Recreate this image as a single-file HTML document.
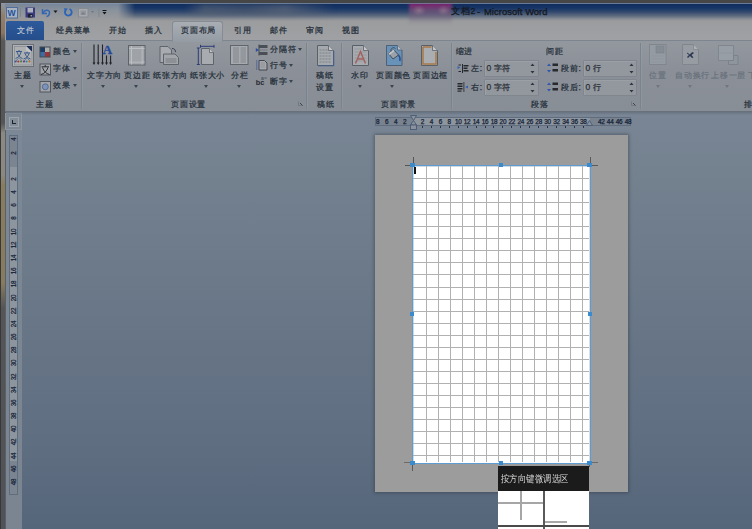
<!DOCTYPE html>
<html><head><meta charset="utf-8">
<style>
*{margin:0;padding:0;box-sizing:border-box}
html,body{width:752px;height:529px;overflow:hidden;background:#6a7889;font-family:"Liberation Sans",sans-serif}
.a{position:absolute}
.t{position:absolute;font-size:8.45px;line-height:9px;color:#26303b;-webkit-text-stroke:0.25px currentColor;white-space:nowrap;letter-spacing:0.75px}
.ar{position:absolute;width:0;height:0;border-left:2.5px solid transparent;border-right:2.5px solid transparent;border-top:3px solid #3a4450}
.sep{position:absolute;top:43px;width:1px;height:66px;background:#7b838d;box-shadow:1px 0 0 rgba(165,170,178,.25)}
svg{position:absolute;overflow:visible}
.rn{position:absolute;top:117px;width:20px;text-align:center;font-size:6.4px;line-height:9px;color:#142238;letter-spacing:-0.25px;font-weight:normal;-webkit-text-stroke:0.25px currentColor}
.vn{position:absolute;left:8.5px;width:10px;height:10px;text-align:center;font-size:6.3px;line-height:10px;color:#142238;transform:rotate(-90deg);letter-spacing:-0.2px;font-weight:normal;-webkit-text-stroke:0.2px currentColor}
</style></head><body><div id="root" style="position:absolute;left:0;top:0;width:752px;height:529px;overflow:hidden">
<!-- ===== top strip + title bar ===== -->
<div class="a" style="left:0;top:3px;width:752px;height:18px;background:linear-gradient(#8e9aaa 0px,#78869a 1px,#86909c 6px,#93979c 12px,#9b9c9e 18px)"></div>
<div class="a" style="left:0;top:3px;width:752px;height:18px;background:linear-gradient(#6a7a90 0px,#112c5c 1px,#163566 5px,#33496e 9px,#5f6c80 13px,rgba(128,134,143,.6) 16px,rgba(154,155,157,0) 18px);-webkit-mask-image:linear-gradient(90deg,transparent 118px,#000 135px)"></div>
<div class="a" style="left:185px;top:4px;width:150px;height:11px;background:linear-gradient(90deg,rgba(100,108,120,0),rgba(100,108,120,.55) 20px,rgba(95,102,114,.45) 60px,rgba(105,112,124,.6) 100px,rgba(100,108,120,0));filter:blur(2px)"></div>
<div class="a" style="left:0;top:12px;width:40px;height:29px;background:radial-gradient(ellipse at 0% 70%,rgba(170,120,80,.45),rgba(160,130,100,0) 70%)"></div>
<div class="a" style="left:0;top:21px;width:752px;height:20px;background:linear-gradient(#9b9c9e,#9fa1a4)"></div>
<div class="a" style="left:409px;top:3px;width:43px;height:21px;background:linear-gradient(rgba(165,25,120,.95) 0px,rgba(130,40,110,.9) 2px,rgba(112,80,120,.85) 7px,rgba(118,100,128,.6) 13px,rgba(150,140,150,0) 21px);filter:blur(1.5px)"></div>
<div class="a" style="left:412px;top:5px;width:14px;height:11px;background:radial-gradient(ellipse,rgba(160,130,150,.6),rgba(160,130,150,0) 70%)"></div>
<div class="a" style="left:437px;top:5px;width:13px;height:11px;background:radial-gradient(ellipse,rgba(160,130,150,.55),rgba(160,130,150,0) 70%)"></div>
<div class="a" style="left:0;top:0;width:752px;height:3px;background:#464646"></div>
<div class="a" style="left:0;top:3px;width:752px;height:1px;background:rgba(130,150,175,.6)"></div>
<div class="t" style="left:451px;top:6px;font-size:8.6px;line-height:11px;color:#15181d">文档2</div><div class="t" style="left:477px;top:6px;font-size:9.5px;line-height:11px;color:#15181d">-</div><div class="t" style="left:484px;top:6px;font-size:9.4px;line-height:11px;color:#15181d;letter-spacing:0.05px">Microsoft Word</div>
<!-- tab row -->
<!-- left window frame -->
<div class="a" style="left:0;top:3px;width:1px;height:526px;background:#383838"></div>
<div class="a" style="left:1px;top:3px;width:4px;height:526px;background:linear-gradient(#8e96a2 0px,#8f7f70 12px,#8c7462 30px,#5a5855 38px,#555555 120px,#8a8982 130px,#8b8880 172px,#8a7d5e 182px,#887b5e 280px,#555558 305px,#4f5257 526px)"></div>
<div class="a" style="left:5px;top:112px;width:1px;height:417px;background:#4a4f55"></div>

<!-- ===== quick access toolbar ===== -->
<svg style="left:0;top:0" width="120" height="21" viewBox="0 0 120 21">
  <rect x="6.5" y="7.5" width="11" height="10.5" fill="#aab2bd" stroke="#4f6e9c" stroke-width="1"/>
  <text x="7.6" y="16.3" font-family="Liberation Sans" font-weight="bold" font-size="8.6" fill="#1f54a0">W</text>
  <rect x="20" y="8" width="1" height="9" fill="#7d8590"/>
  <rect x="25.5" y="7.5" width="9.5" height="10" fill="#3a3a7c"/>
  <rect x="27.5" y="8" width="5.5" height="4.5" fill="#aeb2bf"/>
  <rect x="28" y="14" width="4.5" height="3.5" fill="#1e2036"/>
  <rect x="30.5" y="15" width="1.5" height="1.5" fill="#9a9ca8"/>
  <path d="M42.5 9 V13.5 H47" fill="none" stroke="#3466b4" stroke-width="1.5"/>
  <path d="M43 13 C44.5 9.5 49.5 9.3 49.5 12.5 C49.5 15 48 16.3 46.5 16.5" fill="none" stroke="#3466b4" stroke-width="1.5"/>
  <path d="M53.5 10.5 L57.5 10.5 L55.5 13 Z" fill="#151515"/>
  <path d="M65.7 10 A3.4 3.4 0 1 0 69.5 9" fill="none" stroke="#2a64b8" stroke-width="1.8"/>
  <path d="M63.8 8.2 L67.8 8.6 L65.5 11.8 Z" fill="#2a64b8"/>
  <rect x="78.5" y="8.5" width="9.5" height="8.5" fill="#a6aaaf" stroke="#868a90" stroke-width="0.9"/>
  <rect x="80.5" y="10.5" width="5.5" height="4.5" fill="#92969c"/>
  <path d="M81 14.5 L83 12 L85.5 14.5Z" fill="#7a7e84"/>
  <path d="M91 11 L94 11 L92.5 13 Z" fill="#73777d"/>
  <rect x="98.5" y="7" width="1" height="10" fill="#80868e"/>
  <rect x="102.5" y="10" width="4" height="1" fill="#151515"/>
  <path d="M102.5 12 L106.5 12 L104.5 14.5 Z" fill="#151515"/>
</svg>

<!-- ===== tabs ===== -->
<div class="a" style="left:6px;top:21px;width:38px;height:20px;background:linear-gradient(#2d5a9c,#244d8a);border-radius:2px 2px 0 0"></div>
<div class="t" style="left:17px;top:26px;color:#c9cfd8;-webkit-text-stroke:0.1px currentColor">文件</div>
<div class="t" style="left:56px;top:26px">经典菜单</div>
<div class="t" style="left:109px;top:26px">开始</div>
<div class="t" style="left:145px;top:26px">插入</div>
<div class="t" style="left:234px;top:26px">引用</div>
<div class="t" style="left:270px;top:26px">邮件</div>
<div class="t" style="left:306px;top:26px">审阅</div>
<div class="t" style="left:342px;top:26px">视图</div>

<!-- ===== ribbon panel ===== -->
<div class="a" style="left:5px;top:40px;width:747px;height:72px;background:linear-gradient(#93989f,#8b9098 30px,#888e96);border-top:1px solid #7d858f;border-left:1px solid #7d858f"></div>
<div class="a" style="left:5px;top:111px;width:747px;height:1px;background:#67707b"></div>
<div class="sep" style="left:81px"></div>
<div class="sep" style="left:306px"></div>
<div class="sep" style="left:341px"></div>
<div class="sep" style="left:451px"></div>
<div class="sep" style="left:640px"></div>
<!-- group labels -->
<div class="t" style="left:36px;top:99.5px">主题</div>
<div class="t" style="left:171px;top:99.5px">页面设置</div>
<div class="t" style="left:317px;top:99.5px">稿纸</div>
<div class="t" style="left:381px;top:99.5px">页面背景</div>
<div class="t" style="left:531px;top:99.5px">段落</div>
<div class="t" style="left:744px;top:99.5px">排</div>

<div class="a" style="left:172px;top:21px;width:51px;height:21px;background:linear-gradient(#a9aeb4,#9ba1a8 14px,#959ba3);border:1px solid #858c95;border-bottom:none;border-radius:3px 3px 0 0"></div>
<div class="t" style="left:181px;top:26px">页面布局</div>

<!-- ===== ribbon button labels ===== -->
<div class="t" style="left:14px;top:70.5px">主题</div>
<div class="ar" style="left:20px;top:85px"></div>
<div class="t" style="left:53px;top:46.5px">颜色</div><div class="ar" style="left:72.5px;top:50px"></div>
<div class="t" style="left:53px;top:63.5px">字体</div><div class="ar" style="left:72.5px;top:67px"></div>
<div class="t" style="left:53px;top:80.5px">效果</div><div class="ar" style="left:72.5px;top:84px"></div>
<div class="t" style="left:87px;top:70.5px">文字方向</div><div class="ar" style="left:100.5px;top:85px"></div>
<div class="t" style="left:124px;top:70.5px">页边距</div><div class="ar" style="left:134px;top:85px"></div>
<div class="t" style="left:153px;top:70.5px">纸张方向</div><div class="ar" style="left:166.5px;top:85px"></div>
<div class="t" style="left:190px;top:70.5px">纸张大小</div><div class="ar" style="left:203.5px;top:85px"></div>
<div class="t" style="left:231px;top:70.5px">分栏</div><div class="ar" style="left:236.5px;top:85px"></div>
<div class="t" style="left:270px;top:44.5px">分隔符</div><div class="ar" style="left:297.5px;top:48px"></div>
<div class="t" style="left:270px;top:60.5px">行号</div><div class="ar" style="left:288.5px;top:64px"></div>
<div class="t" style="left:270px;top:76.5px">断字</div><div class="ar" style="left:288.5px;top:80px"></div>
<div class="t" style="left:316px;top:70.5px">稿纸</div>
<div class="t" style="left:316px;top:82.5px">设置</div>
<div class="t" style="left:351px;top:70.5px">水印</div><div class="ar" style="left:357.5px;top:85px"></div>
<div class="t" style="left:376px;top:70.5px">页面颜色</div><div class="ar" style="left:390px;top:85px"></div>
<div class="t" style="left:413px;top:70.5px">页面边框</div>
<div class="t" style="left:455.5px;top:46.5px">缩进</div>
<div class="t" style="left:471px;top:63.5px">左:</div>
<div class="t" style="left:471px;top:82.5px">右:</div>
<div class="t" style="left:546px;top:46.5px">间距</div>
<div class="t" style="left:561px;top:63.5px">段前:</div>
<div class="t" style="left:561px;top:82.5px">段后:</div>
<!-- spin boxes -->
<div class="a" style="left:484px;top:60px;width:55px;height:17px;background:#93989f;border:1px solid #7f868e;border-radius:1px;box-shadow:inset 1px 1px 0 rgba(170,175,180,.35)"></div>
<div class="a" style="left:484px;top:79px;width:55px;height:17px;background:#93989f;border:1px solid #7f868e;border-radius:1px;box-shadow:inset 1px 1px 0 rgba(170,175,180,.35)"></div>
<div class="a" style="left:583px;top:60px;width:54px;height:17px;background:#93989f;border:1px solid #7f868e;border-radius:1px;box-shadow:inset 1px 1px 0 rgba(170,175,180,.35)"></div>
<div class="a" style="left:583px;top:79px;width:54px;height:17px;background:#93989f;border:1px solid #7f868e;border-radius:1px;box-shadow:inset 1px 1px 0 rgba(170,175,180,.35)"></div>
<div class="t" style="left:486.5px;top:63.5px;color:#2a2f36;letter-spacing:0.2px">0 字符</div>
<div class="t" style="left:486.5px;top:82.5px;color:#2a2f36;letter-spacing:0.2px">0 字符</div>
<div class="t" style="left:585.5px;top:63.5px;color:#2a2f36;letter-spacing:0.2px">0 行</div>
<div class="t" style="left:585.5px;top:82.5px;color:#2a2f36;letter-spacing:0.2px">0 行</div>
<svg style="left:0;top:0" width="752" height="112">
 <g fill="#2d3540">
  <path d="M530.5 66 L534.5 66 L532.5 63.5Z"/><path d="M530.5 71 L534.5 71 L532.5 73.5Z"/>
  <path d="M530.5 85 L534.5 85 L532.5 82.5Z"/><path d="M530.5 90 L534.5 90 L532.5 92.5Z"/>
  <path d="M629.5 66 L633.5 66 L631.5 63.5Z"/><path d="M629.5 71 L633.5 71 L631.5 73.5Z"/>
  <path d="M629.5 85 L633.5 85 L631.5 82.5Z"/><path d="M629.5 90 L633.5 90 L631.5 92.5Z"/>
 </g>
</svg>
<div class="t" style="left:649px;top:70.5px;color:#6a727c">位置</div><div class="ar" style="left:655.5px;top:85px;border-top-color:#6f7780"></div>
<div class="t" style="left:675px;top:70.5px;color:#6a727c">自动换行</div><div class="ar" style="left:687.5px;top:85px;border-top-color:#6f7780"></div>
<div class="t" style="left:711px;top:70.5px;color:#6a727c">上移一层</div><div class="ar" style="left:724.5px;top:85px;border-top-color:#6f7780"></div>
<div class="t" style="left:748px;top:70.5px;color:#6a727c">下</div>
<!-- dialog launchers -->
<svg style="left:0;top:0" width="752" height="112">
 <path d="M298.5 101.5 L298.5 105.5 L302.5 105.5" fill="none" stroke="#6e757e" stroke-width="0.8"/>
 <path d="M300 103 L302.5 105.5" stroke="#3c434c" stroke-width="1"/>
 <path d="M631.5 101.5 L631.5 105.5 L635.5 105.5" fill="none" stroke="#6e757e" stroke-width="0.8"/>
 <path d="M633 103 L635.5 105.5" stroke="#3c434c" stroke-width="1"/>
</svg>

<!-- ===== document area ===== -->
<div class="a" style="left:6px;top:112px;width:746px;height:417px;background:linear-gradient(#7a8695 0px,#74818f 60px,#6b7989 170px,#5f6e81 330px,#56667a 417px)"></div>
<div class="a" style="left:5px;top:112px;width:1px;height:417px;background:#5a6068"></div>
<div class="a" style="left:6px;top:112px;width:16px;height:417px;background:linear-gradient(#7c8896,#7b8591)"></div>
<!-- tab selector -->
<div class="a" style="left:5px;top:113px;width:17px;height:17px;border:1px solid #8d97a2;background:#7d8894"></div>
<div class="a" style="left:9px;top:117px;width:10px;height:10px;border:1px solid #9ca5ae;background:#838d98"></div>
<div class="a" style="left:12px;top:119.5px;width:1.2px;height:4.5px;background:#1a2230"></div>
<div class="a" style="left:12px;top:123px;width:3.5px;height:1.2px;background:#1a2230"></div>
<!-- vertical ruler -->
<div class="a" style="left:9px;top:135px;width:9px;height:360px;border:1px solid #5f6d7e;background:#8d959e"></div>
<div class="a" style="left:10px;top:136px;width:7px;height:31px;background:#7b8591"></div>
<div class="a" style="left:10px;top:461px;width:7px;height:33px;background:#7b8591"></div>
<!-- horizontal ruler -->
<div class="a" style="left:375px;top:117px;width:256px;height:9px;border:1px solid #5f6d7e;background:#8d959e"></div>
<div class="a" style="left:376px;top:118px;width:37px;height:7px;background:#79838f"></div>
<div class="a" style="left:590px;top:118px;width:40px;height:7px;background:#79838f"></div>
<div class="rn" style="left:367.74px">8</div>
<div class="rn" style="left:376.68px">6</div>
<div class="rn" style="left:385.62px">4</div>
<div class="rn" style="left:394.56px">2</div>
<div class="rn" style="left:412.44px">2</div>
<div class="rn" style="left:421.38px">4</div>
<div class="rn" style="left:430.32px">6</div>
<div class="rn" style="left:439.26px">8</div>
<div class="rn" style="left:448.20px">10</div>
<div class="rn" style="left:457.14px">12</div>
<div class="rn" style="left:466.08px">14</div>
<div class="rn" style="left:475.02px">16</div>
<div class="rn" style="left:483.96px">18</div>
<div class="rn" style="left:492.90px">20</div>
<div class="rn" style="left:501.84px">22</div>
<div class="rn" style="left:510.78px">24</div>
<div class="rn" style="left:519.72px">26</div>
<div class="rn" style="left:528.66px">28</div>
<div class="rn" style="left:537.60px">30</div>
<div class="rn" style="left:546.54px">32</div>
<div class="rn" style="left:555.48px">34</div>
<div class="rn" style="left:564.42px">36</div>
<div class="rn" style="left:573.36px">38</div>
<div class="rn" style="left:591.24px">42</div>
<div class="rn" style="left:600.18px">44</div>
<div class="rn" style="left:609.12px">46</div>
<div class="rn" style="left:618.06px">48</div>
<div class="a" style="left:421.94px;top:126px;width:1px;height:1.5px;background:#2a3545"></div>
<div class="a" style="left:430.88px;top:126px;width:1px;height:1.5px;background:#2a3545"></div>
<div class="a" style="left:439.82px;top:126px;width:1px;height:1.5px;background:#2a3545"></div>
<div class="a" style="left:448.76px;top:126px;width:1px;height:1.5px;background:#2a3545"></div>
<div class="a" style="left:457.70px;top:126px;width:1px;height:1.5px;background:#2a3545"></div>
<div class="a" style="left:466.64px;top:126px;width:1px;height:1.5px;background:#2a3545"></div>
<div class="a" style="left:475.58px;top:126px;width:1px;height:1.5px;background:#2a3545"></div>
<div class="a" style="left:484.52px;top:126px;width:1px;height:1.5px;background:#2a3545"></div>
<div class="a" style="left:493.46px;top:126px;width:1px;height:1.5px;background:#2a3545"></div>
<div class="a" style="left:502.40px;top:126px;width:1px;height:1.5px;background:#2a3545"></div>
<div class="a" style="left:511.34px;top:126px;width:1px;height:1.5px;background:#2a3545"></div>
<div class="a" style="left:520.28px;top:126px;width:1px;height:1.5px;background:#2a3545"></div>
<div class="a" style="left:529.22px;top:126px;width:1px;height:1.5px;background:#2a3545"></div>
<div class="a" style="left:538.16px;top:126px;width:1px;height:1.5px;background:#2a3545"></div>
<div class="a" style="left:547.10px;top:126px;width:1px;height:1.5px;background:#2a3545"></div>
<div class="a" style="left:556.04px;top:126px;width:1px;height:1.5px;background:#2a3545"></div>
<div class="a" style="left:564.98px;top:126px;width:1px;height:1.5px;background:#2a3545"></div>
<div class="a" style="left:573.92px;top:126px;width:1px;height:1.5px;background:#2a3545"></div>
<div class="a" style="left:582.86px;top:126px;width:1px;height:1.5px;background:#2a3545"></div>
<div class="vn" style="top:134.46px">4</div>
<div class="vn" style="top:147.63px">2</div>
<div class="vn" style="top:173.97px">2</div>
<div class="vn" style="top:187.14px">4</div>
<div class="vn" style="top:200.31px">6</div>
<div class="vn" style="top:213.48px">8</div>
<div class="vn" style="top:226.65px">10</div>
<div class="vn" style="top:239.82px">12</div>
<div class="vn" style="top:252.99px">14</div>
<div class="vn" style="top:266.16px">16</div>
<div class="vn" style="top:279.33px">18</div>
<div class="vn" style="top:292.50px">20</div>
<div class="vn" style="top:305.67px">22</div>
<div class="vn" style="top:318.84px">24</div>
<div class="vn" style="top:332.01px">26</div>
<div class="vn" style="top:345.18px">28</div>
<div class="vn" style="top:358.35px">30</div>
<div class="vn" style="top:371.52px">32</div>
<div class="vn" style="top:384.69px">34</div>
<div class="vn" style="top:397.86px">36</div>
<div class="vn" style="top:411.03px">38</div>
<div class="vn" style="top:424.20px">40</div>
<div class="vn" style="top:437.37px">42</div>
<div class="vn" style="top:450.54px">44</div>
<div class="vn" style="top:463.71px">46</div>
<div class="vn" style="top:476.88px">48</div>
<svg style="left:0;top:0" width="752" height="140">
 <path d="M410.5 115.5 H416.5 L413.5 120.5 Z" fill="#8a939d" stroke="#4a5a74" stroke-width="0.9"/>
 <path d="M413.5 120.5 L416.5 125 H410.5 Z" fill="#8a939d" stroke="#4a5a74" stroke-width="0.9"/>
 <rect x="410.5" y="125" width="6" height="4.5" fill="#8a939d" stroke="#4a5a74" stroke-width="0.9"/>
 <path d="M589.5 120.5 L592.5 125.5 H586.5 Z" fill="#8a939d" stroke="#4a5a74" stroke-width="0.9"/>
</svg>
<!-- page -->
<div class="a" style="left:375px;top:135px;width:253px;height:357px;background:#9c9c9c;box-shadow:0 0 3px 1px rgba(40,50,60,.45)"></div>
<!-- selection -->
<div class="a" style="left:412px;top:165px;width:179px;height:299px;background:#fff;border:1px solid #5d9bd0"></div>
<div class="a" style="left:413px;top:166px;width:177px;height:1px;background:#cfd9e0"></div>
<div class="a" style="left:413px;top:166px;width:1px;height:296px;background:#cfd9e0"></div>
<div class="a" style="left:589px;top:166px;width:1px;height:297px;background:#d3e0ea"></div>
<div>
<div class="a" style="left:426px;top:166px;width:1px;height:296px;background:#b1b1b1"></div>
<div class="a" style="left:438px;top:166px;width:1px;height:296px;background:#b1b1b1"></div>
<div class="a" style="left:450px;top:166px;width:1px;height:296px;background:#b1b1b1"></div>
<div class="a" style="left:462px;top:166px;width:1px;height:296px;background:#b1b1b1"></div>
<div class="a" style="left:474px;top:166px;width:1px;height:296px;background:#b1b1b1"></div>
<div class="a" style="left:486px;top:166px;width:1px;height:296px;background:#b1b1b1"></div>
<div class="a" style="left:498px;top:166px;width:1px;height:296px;background:#b1b1b1"></div>
<div class="a" style="left:510px;top:166px;width:1px;height:296px;background:#b1b1b1"></div>
<div class="a" style="left:522px;top:166px;width:1px;height:296px;background:#b1b1b1"></div>
<div class="a" style="left:534px;top:166px;width:1px;height:296px;background:#b1b1b1"></div>
<div class="a" style="left:546px;top:166px;width:1px;height:296px;background:#b1b1b1"></div>
<div class="a" style="left:558px;top:166px;width:1px;height:296px;background:#b1b1b1"></div>
<div class="a" style="left:570px;top:166px;width:1px;height:296px;background:#b1b1b1"></div>
<div class="a" style="left:582px;top:166px;width:1px;height:296px;background:#b1b1b1"></div>
<div class="a" style="left:413px;top:178px;width:176px;height:1px;background:#b1b1b1"></div>
<div class="a" style="left:413px;top:190px;width:176px;height:1px;background:#b1b1b1"></div>
<div class="a" style="left:413px;top:202px;width:176px;height:1px;background:#b1b1b1"></div>
<div class="a" style="left:413px;top:214px;width:176px;height:1px;background:#b1b1b1"></div>
<div class="a" style="left:413px;top:226px;width:176px;height:1px;background:#b1b1b1"></div>
<div class="a" style="left:413px;top:238px;width:176px;height:1px;background:#b1b1b1"></div>
<div class="a" style="left:413px;top:250px;width:176px;height:1px;background:#b1b1b1"></div>
<div class="a" style="left:413px;top:262px;width:176px;height:1px;background:#b1b1b1"></div>
<div class="a" style="left:413px;top:274px;width:176px;height:1px;background:#b1b1b1"></div>
<div class="a" style="left:413px;top:287px;width:176px;height:1px;background:#b1b1b1"></div>
<div class="a" style="left:413px;top:299px;width:176px;height:1px;background:#b1b1b1"></div>
<div class="a" style="left:413px;top:311px;width:176px;height:1px;background:#b1b1b1"></div>
<div class="a" style="left:413px;top:323px;width:176px;height:1px;background:#b1b1b1"></div>
<div class="a" style="left:413px;top:335px;width:176px;height:1px;background:#b1b1b1"></div>
<div class="a" style="left:413px;top:347px;width:176px;height:1px;background:#b1b1b1"></div>
<div class="a" style="left:413px;top:359px;width:176px;height:1px;background:#b1b1b1"></div>
<div class="a" style="left:413px;top:371px;width:176px;height:1px;background:#b1b1b1"></div>
<div class="a" style="left:413px;top:383px;width:176px;height:1px;background:#b1b1b1"></div>
<div class="a" style="left:413px;top:395px;width:176px;height:1px;background:#b1b1b1"></div>
<div class="a" style="left:413px;top:407px;width:176px;height:1px;background:#b1b1b1"></div>
<div class="a" style="left:413px;top:419px;width:176px;height:1px;background:#b1b1b1"></div>
<div class="a" style="left:413px;top:431px;width:176px;height:1px;background:#b1b1b1"></div>
<div class="a" style="left:413px;top:443px;width:176px;height:1px;background:#b1b1b1"></div>
<div class="a" style="left:413px;top:455px;width:176px;height:1px;background:#b1b1b1"></div>
</div>
<!-- cursor -->
<div class="a" style="left:414px;top:167px;width:1.5px;height:7px;background:#111"></div>
<!-- crosshair ticks -->
<div class="a" style="left:413px;top:157px;width:1px;height:7px;background:#555"></div>
<div class="a" style="left:405px;top:165px;width:6px;height:1px;background:#555"></div>
<div class="a" style="left:590px;top:157px;width:1px;height:7px;background:#5a5a5a"></div>
<div class="a" style="left:591px;top:165px;width:7px;height:1px;background:#5a5a5a"></div>
<div class="a" style="left:404px;top:462px;width:6px;height:1px;background:#6a6a6a"></div>
<div class="a" style="left:412px;top:465px;width:1px;height:6px;background:#5a5a5a"></div>
<div class="a" style="left:592px;top:462px;width:6px;height:1px;background:#6a6a6a"></div>
<div class="a" style="left:589px;top:465px;width:1px;height:2px;background:#5a5a5a"></div>
<!-- handles -->
<div class="a" style="left:410px;top:163px;width:5px;height:4px;background:#3b8acb"></div>
<div class="a" style="left:499px;top:163px;width:4px;height:4px;background:#3b8acb"></div>
<div class="a" style="left:587px;top:163px;width:5px;height:4px;background:#3b8acb"></div>
<div class="a" style="left:410px;top:312px;width:4px;height:4px;background:#3b8acb"></div>
<div class="a" style="left:588px;top:312px;width:4px;height:4px;background:#3b8acb"></div>
<div class="a" style="left:410px;top:461px;width:5px;height:4px;background:#3b8acb"></div>
<div class="a" style="left:499px;top:461px;width:4px;height:4px;background:#3b8acb"></div>
<div class="a" style="left:587px;top:461px;width:5px;height:4px;background:#3b8acb"></div>
<!-- tooltip + magnifier -->
<div class="a" style="left:498px;top:466px;width:91px;height:25px;background:#1b1b1b"></div>
<div class="t" style="left:501px;top:474px;font-size:8.1px;color:#d8d8d8;transform:scaleY(1.2);transform-origin:0 0;-webkit-text-stroke:0;letter-spacing:0.45px">按方向键微调选区</div>
<div class="a" style="left:498px;top:491px;width:91px;height:38px;background:#fff"></div>
<div class="a" style="left:519.5px;top:491px;width:2px;height:29px;background:#a6a6a6"></div>
<div class="a" style="left:498px;top:502px;width:45px;height:2px;background:#a6a6a6"></div>
<div class="a" style="left:543px;top:491px;width:2px;height:38px;background:#5a5a5a"></div>
<div class="a" style="left:545px;top:520.5px;width:22px;height:2px;background:#a8a8a8"></div>
<div class="a" style="left:498px;top:525px;width:91px;height:2px;background:#4a4a4a"></div>
<div class="a" style="left:6px;top:112px;width:746px;height:3px;background:linear-gradient(rgba(55,65,78,.28),rgba(55,65,78,0))"></div>

<!-- ===== ribbon icons ===== -->
<svg style="left:0;top:0" width="752" height="112" viewBox="0 0 752 112">
 <!-- 主题 big button -->
 <rect x="12.5" y="44.5" width="21" height="22" fill="#a3a8ae" stroke="#6b7077" stroke-width="1"/>
 <rect x="13.5" y="45.5" width="19" height="20" fill="none" stroke="#b3b7bc" stroke-width="0.8"/>
 <rect x="14.5" y="46.5" width="17.5" height="18.5" fill="#adafb1" stroke="#80858b" stroke-width="0.6"/>
 <path d="M26 46 L32 46 L32 52 Z" fill="#1f3158"/>
 <path d="M26 46 L26 52 L32 52" fill="#c3c5c7"/>
 <g stroke="#2d4f86" stroke-width="0.9" fill="none">
  <path d="M16 51.5 H22 M19 50 V51.5 M17 52 C18.5 56 20 57.5 22.5 58.5 M21 52 C20 56 18 57.5 15.5 58.5"/>
  <path d="M24 53 H30 M27 51.5 V53 M25 53.5 C26.5 57 28 58 30.5 59 M29 53.5 C28 57 26 58 23.5 59"/>
  <path d="M16 61 L19 57.5 L22 61 M24 61 L27 58 L30 61" stroke="#3d5d8c" stroke-width="0.6"/>
 </g>
 <circle cx="15.6" cy="61.5" r="1.1" fill="#2d5aa0"/>
 <circle cx="18.3" cy="61.5" r="1.1" fill="#b03030"/>
 <circle cx="21" cy="61.5" r="1.1" fill="#4e8a3a"/>
 <circle cx="23.9" cy="61.5" r="1.1" fill="#6a3a8a"/>
 <circle cx="26.6" cy="61.5" r="1.1" fill="#2a8a9a"/>
 <circle cx="29.5" cy="61.5" r="1.1" fill="#c0702a"/>
 <!-- 颜色 -->
 <rect x="39.5" y="46.5" width="11" height="11" fill="#454a52"/>
 <rect x="40.5" y="47.5" width="4.5" height="4.5" fill="#1b3a66"/>
 <rect x="45" y="47.5" width="4.5" height="4.5" fill="#adadaa"/>
 <rect x="40.5" y="52" width="4.5" height="4.5" fill="#3c6aa2"/>
 <rect x="45" y="52" width="4.5" height="4.5" fill="#9a3434"/>
 <!-- 字体 -->
 <rect x="40" y="64" width="10.5" height="11" fill="#a2a5a9" stroke="#50555c" stroke-width="1"/>
 <g stroke="#1c1f24" stroke-width="0.9" fill="none">
  <path d="M41.5 66.8 H49 M45.2 65 V66.8 M42.5 67.5 C44 71.5 46 73.5 49.5 74.5 M48 67.5 C46.5 71.5 44.5 73.5 41 74.5"/>
 </g>
 <!-- 效果 -->
 <rect x="40" y="81.5" width="10.5" height="10.5" fill="#a2a5a9" stroke="#50555c" stroke-width="1"/>
 <circle cx="45.3" cy="86.8" r="3" fill="#7d93b8" stroke="#48628c" stroke-width="0.8"/>
 <!-- 文字方向 -->
 <g stroke="#202328" stroke-width="1.1">
  <path d="M94 44.5 V63 M98.2 44.5 V63 M102.5 44.5 V63 M106.5 55.5 V63 M110.6 55.5 V63"/>
 </g>
 <g fill="#202328">
  <path d="M92.5 62.5 L95.5 62.5 L94 65Z M96.7 62.5 L99.7 62.5 L98.2 65Z M101 62.5 L104 62.5 L102.5 65Z M105 62.5 L108 62.5 L106.5 65Z M109.1 62.5 L112.1 62.5 L110.6 65Z"/>
 </g>
 <text x="102.8" y="54.3" font-family="Liberation Serif" font-weight="bold" font-size="13" fill="#24489a" stroke="#24489a" stroke-width="0.3">A</text>
 <!-- 页边距 -->
 <rect x="128.5" y="45.5" width="16.5" height="19.5" fill="#a3a6aa" stroke="#5e636a" stroke-width="1"/>
 <path d="M131.5 46 V64.5 M142 46 V64.5 M129 48.5 H144.5 M129 62 H144.5" stroke="#bcbfc3" stroke-width="1"/>
 <rect x="132" y="49" width="9.5" height="12.5" fill="#9fa2a6"/>
 <!-- 纸张方向 -->
 <path d="M160 46.5 H168 L171.5 50 V62.5 H160 Z" fill="#a8abaf" stroke="#5f646b" stroke-width="1"/>
 <path d="M163.5 54 H175 L178.5 57.5 V64.5 H163.5 Z" fill="#a2a5a9" stroke="#5f646b" stroke-width="1"/>
 <rect x="165.5" y="58" width="11" height="5" fill="#8d9196"/>
 <path d="M172 48.5 C174.5 48.5 175.5 50 175.5 52" fill="none" stroke="#2d3442" stroke-width="0.9"/>
 <!-- 纸张大小 -->
 <path d="M198.3 48 V64.5 M196.8 48 H199.8 M196.8 64.5 H199.8" stroke="#2b3d78" stroke-width="1"/>
 <path d="M200.5 46.3 H214 M200.5 44.8 V47.8 M214 44.8 V47.8" stroke="#2b3d78" stroke-width="1"/>
 <path d="M201.5 48.5 H209.5 L213.5 52.5 V64.5 H201.5 Z" fill="#a8abaf" stroke="#5f646b" stroke-width="1"/>
 <path d="M209.5 48.5 V52.5 H213.5" fill="#c5c7ca" stroke="#5f646b" stroke-width="0.8"/>
 <!-- 分栏 -->
 <rect x="230.5" y="45.5" width="17.5" height="19" fill="#a7aaae" stroke="#60656c" stroke-width="1"/>
 <g stroke="#80858c" stroke-width="1">
  <path d="M233 48 H239 M233 50 H239 M233 52 H239 M233 54 H239 M233 56 H239 M233 58 H239 M233 60 H239 M233 62 H239"/>
  <path d="M240.5 48 H246 M240.5 50 H246 M240.5 52 H246 M240.5 54 H246 M240.5 56 H246 M240.5 58 H246 M240.5 60 H246 M240.5 62 H246"/>
 </g>
 <!-- 分隔符 small -->
 <path d="M255.8 48 L258.8 50 L255.8 52Z" fill="#2b4fa0"/>
 <rect x="258.5" y="44.5" width="1" height="11" fill="#3c4148"/>
 <rect x="259" y="45" width="8.5" height="3" fill="#4a4f56"/>
 <rect x="259" y="52" width="8.5" height="3" fill="#4a4f56"/>
 <path d="M259 50 H267.5" stroke="#6a7078" stroke-width="0.8"/>
 <!-- 行号 -->
 <path d="M256.7 60.5 V70" stroke="#3050a0" stroke-width="1.2" stroke-dasharray="1 1"/>
 <path d="M259 60.5 H264.5 L267 63 V70 H259 Z" fill="#a5a8ac" stroke="#42474e" stroke-width="1" stroke-linejoin="miter"/>
 <path d="M260.5 63 H265 M260.5 65 H265 M260.5 67 H265" stroke="#7d8288" stroke-width="0.6"/>
 <!-- 断字 -->
 <text x="255.8" y="85.3" font-family="Liberation Sans" font-weight="bold" font-size="7.3" fill="#25282d">bc</text>
 <text x="261" y="80" font-family="Liberation Sans" font-size="5" fill="#3a3e44">a</text>
 <path d="M264.5 78 H266.5" stroke="#3a3e44" stroke-width="0.8"/>
 <!-- 稿纸设置 -->
 <path d="M317.5 45.5 H328.5 L333.5 50.5 V65.5 H317.5 Z" fill="#a5a8ac" stroke="#5a6067" stroke-width="1"/>
 <path d="M328.5 45.5 V50.5 H333.5" fill="#c3c5c8" stroke="#5a6067" stroke-width="0.8"/>
 <g fill="#90959b">
  <rect x="319.5" y="49" width="2" height="2"/><rect x="322.5" y="49" width="2" height="2"/><rect x="325.5" y="49" width="2" height="2"/>
  <rect x="319.5" y="52" width="2" height="2"/><rect x="322.5" y="52" width="2" height="2"/><rect x="325.5" y="52" width="2" height="2"/><rect x="328.5" y="52" width="2" height="2"/>
  <rect x="319.5" y="55" width="2" height="2"/><rect x="322.5" y="55" width="2" height="2"/><rect x="325.5" y="55" width="2" height="2"/><rect x="328.5" y="55" width="2" height="2"/>
  <rect x="319.5" y="58" width="2" height="2"/><rect x="322.5" y="58" width="2" height="2"/><rect x="325.5" y="58" width="2" height="2"/><rect x="328.5" y="58" width="2" height="2"/>
  <rect x="319.5" y="61" width="2" height="2"/><rect x="322.5" y="61" width="2" height="2"/><rect x="325.5" y="61" width="2" height="2"/><rect x="328.5" y="61" width="2" height="2"/>
 </g>
 <path d="M333.8 51 V65.8 H318" fill="none" stroke="#3f5f90" stroke-width="0.9"/>
 <!-- 水印 -->
 <path d="M352.5 45.5 H363.5 L368.5 50.5 V65.5 H352.5 Z" fill="#a7aaae" stroke="#5a6067" stroke-width="1"/>
 <path d="M363.5 45.5 V50.5 H368.5" fill="#c3c5c8" stroke="#5a6067" stroke-width="0.8"/>
 <g stroke="#8c9197" stroke-width="0.6"><path d="M354.5 49 H362 M354.5 52 H366.5 M354.5 55 H366.5 M354.5 58 H366.5 M354.5 61 H366.5"/></g>
 <path d="M355.5 63.5 L360.5 51.5 L365.5 63.5 M357.5 59 H363.5" fill="none" stroke="#a3605e" stroke-width="1.4"/>
 <!-- 页面颜色 -->
 <path d="M386.5 45.5 H397.5 L402 50 V65.5 H386.5 Z" fill="#6992b9" stroke="#4f5f74" stroke-width="1"/>
 <path d="M397.5 45.5 V50 H402" fill="#b9bec4" stroke="#4f5f74" stroke-width="0.8"/>
 <path d="M388.5 53.5 L393.5 49.5 L398.5 55 L393 59 Z" fill="#9ba1a8" stroke="#41464d" stroke-width="0.9"/>
 <path d="M388.5 53.5 L393.5 49.5 L394.5 51 L389.5 55 Z" fill="#c3c7cc"/>
 <path d="M391 51.5 C390 48.5 393.5 46.5 395.5 48.5" fill="none" stroke="#41464d" stroke-width="0.9"/>
 <path d="M398.5 55 C400 57 400.5 59 399.8 61" fill="none" stroke="#2a4f90" stroke-width="1.4"/>
 <!-- 页面边框 -->
 <path d="M421.5 45.5 H432.5 L437.5 50.5 V65.5 H421.5 Z" fill="#aaadb1" stroke="#5a6067" stroke-width="1"/>
 <path d="M432.5 45.5 V50.5 H437.5" fill="#c3c5c8" stroke="#5a6067" stroke-width="0.8"/>
 <path d="M423 47 H431.5 M423 47 V64 H436 V52" fill="none" stroke="#a97a48" stroke-width="1.5"/>
<!-- indent icons -->
 <path d="M457.5 66 L460.5 67.5 L457.5 69Z" fill="#3a62b4"/>
 <g fill="#25282d">
  <rect x="462" y="64" width="1" height="9"/><rect x="463.5" y="65" width="5" height="1.5"/><rect x="463.5" y="67.5" width="4" height="1.5"/><rect x="463.5" y="70" width="5" height="1.5"/>
  <rect x="458.5" y="64.5" width="2.5" height="1"/><rect x="458.5" y="71" width="2.5" height="1"/>
 </g>
 <g fill="#25282d">
  <rect x="457.5" y="83" width="5" height="1.5"/><rect x="457.5" y="85.5" width="5" height="1.5"/><rect x="457.5" y="88" width="5" height="1.5"/><rect x="457.5" y="90.5" width="4" height="1.2"/>
  <rect x="463.5" y="82" width="0.8" height="10"/>
 </g>
 <path d="M468 85.5 L465 87 L468 88.5Z" fill="#3a62b4"/>
 <!-- spacing icons -->
 <g fill="#2f55b0">
  <path d="M547 66 L549 63.5 L551 66Z M547 70 L549 72.5 L551 70Z"/>
  <path d="M547 85 L549 82.5 L551 85Z M547 89 L549 91.5 L551 89Z"/>
 </g>
 <g fill="#27292d">
  <rect x="552.5" y="63.5" width="5.5" height="2.5"/><rect x="552.5" y="69" width="5.5" height="2.5"/>
  <rect x="552.5" y="82.5" width="5.5" height="2.5"/><rect x="552.5" y="88" width="5.5" height="2.5"/>
 </g>
 <!-- 位置 (disabled) -->
 <rect x="649.5" y="44.5" width="16.5" height="20" fill="#959ba2" stroke="#80868e" stroke-width="1"/>
 <rect x="656" y="46" width="8" height="7" fill="#868c94" stroke="#7a8088" stroke-width="0.6"/>
 <g stroke="#8a9098" stroke-width="0.5"><path d="M651 56 H664 M651 59 H664 M651 62 H664"/></g>
 <!-- 自动换行 -->
 <path d="M682.5 44.5 H693.5 L698.5 49.5 V64.5 H682.5 Z" fill="#979ca3" stroke="#80868e" stroke-width="1"/>
 <path d="M693.5 44.5 V49.5 H698.5" fill="#aeb2b7" stroke="#80868e" stroke-width="0.8"/>
 <path d="M687.5 52.5 L689.5 54.5 L692.5 52 L694 53 L691.5 55 L693.5 57.5 L692 58 L690 56 L688 58 L687 57 L689 55 L687 53.5Z" fill="#2b3650"/>
 <!-- 上移一层 -->
 <rect x="718.5" y="45.5" width="15" height="15" fill="#989ea5" stroke="#80868e" stroke-width="1"/>
 <path d="M718.5 53 H733.5" stroke="#8c9299" stroke-width="0.6"/>
 <path d="M733.5 55.5 H738 V64.5 H728.5 V60.5 H733.5 Z" fill="#8f959c" stroke="#7c828a" stroke-width="1"/>
</svg>

</div></body></html>
